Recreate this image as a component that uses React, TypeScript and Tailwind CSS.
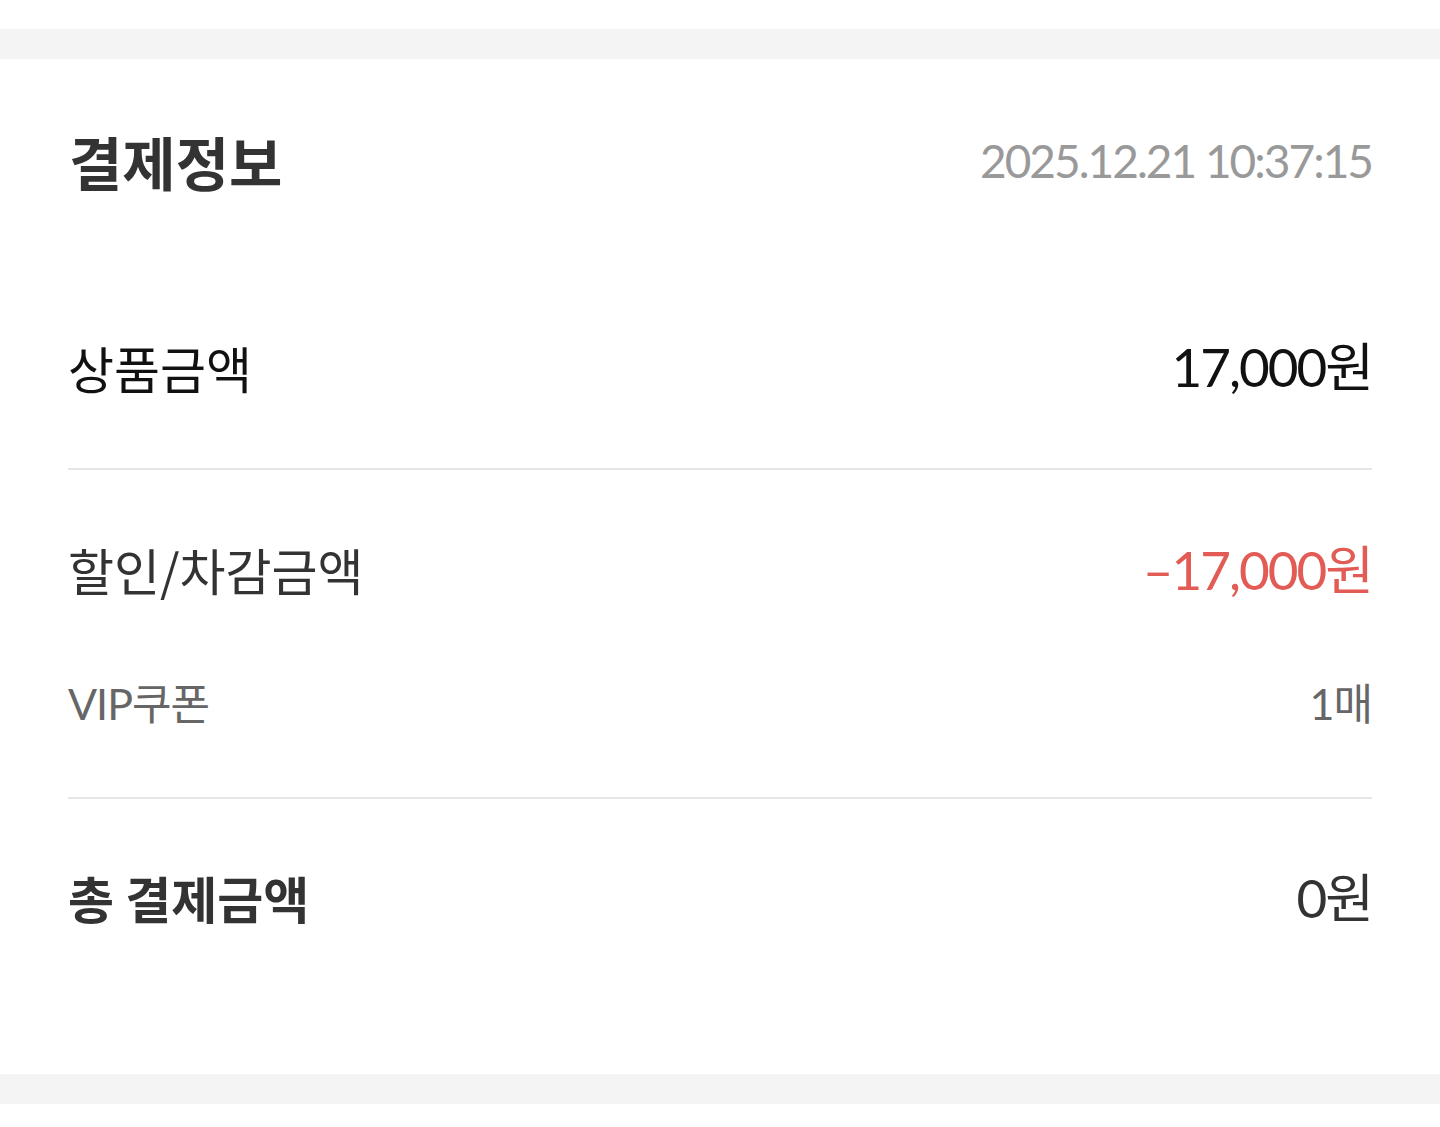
import React from "react";

const font = { fontFamily: 'Lato, "Noto Sans CJK KR", sans-serif' };
const kr = { fontFamily: '"Noto Sans CJK KR", sans-serif' };

export default function App() {
  return (
    <div className="min-h-[1127px] w-full bg-white" style={font}>
      <div className="h-[29px] bg-white" />
      <div className="h-[30px] bg-[#f4f4f4]" />
      <section className="bg-white px-[68px]">
        <div className="flex h-[204px] items-center justify-between">
          <h2 className="pl-[1px] text-[58px] font-bold leading-none text-[#333333]" style={kr}>
            결제정보
          </h2>
          <span className="text-[46px] leading-none text-[#999999] tracking-[-2px]">
            2025.12.21 10:37:15
          </span>
        </div>

        <div className="flex h-[205px] items-center justify-between pt-[2px]">
          <span className="text-[50px] leading-none text-[#111111]" style={kr}>
            상품금액
          </span>
          <span className="text-[53px] leading-none text-[#111111] tracking-[-2px]">
            17,000원
          </span>
        </div>

        <div className="h-[2px] bg-[#e6e6e6]" />

        <div className="flex h-[200px] items-center justify-between pb-[2px]">
          <span className="text-[50px] leading-none text-[#333333]" style={kr}>
            할인/차감금액
          </span>
          <span className="text-[53px] leading-none text-[#e25b55] tracking-[-2px]">
            <span>–</span>17,000원
          </span>
        </div>
        <div className="flex h-[66px] items-center justify-between">
          <span className="text-[43px] leading-none text-[#666666] tracking-[-1px]">VIP쿠폰</span>
          <span className="text-[43px] leading-none text-[#666666] tracking-[-1px]">1매</span>
        </div>
        <div className="h-[61px]" />

        <div className="h-[2px] bg-[#e6e6e6]" />

        <div className="flex h-[196px] items-center justify-between">
          <span className="text-[50px] font-bold leading-none text-[#333333]" style={kr}>
            총 결제금액
          </span>
          <span className="text-[53px] leading-none text-[#333333] tracking-[-2px]">0원</span>
        </div>
        <div className="h-[79px]" />
      </section>
      <div className="h-[30px] bg-[#f4f4f4]" />
      <div className="h-[23px] bg-white" />
    </div>
  );
}
